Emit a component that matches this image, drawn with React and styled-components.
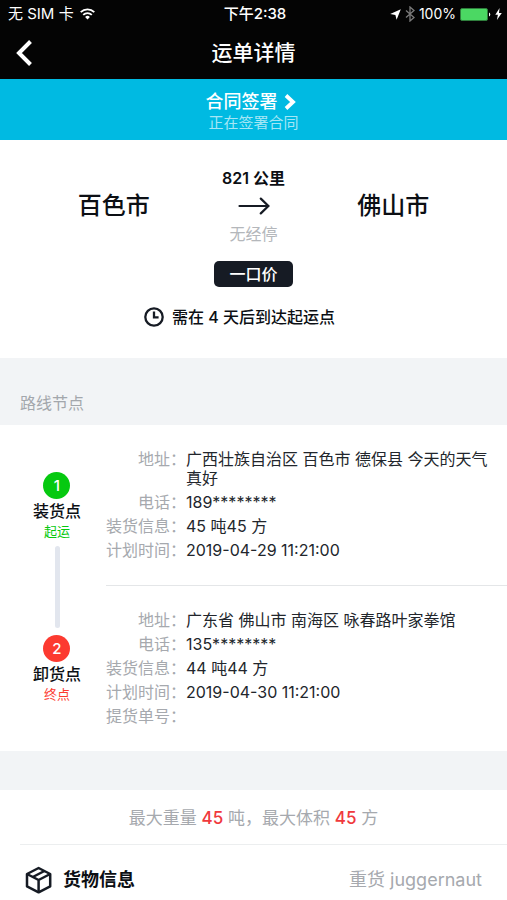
import React from 'react';
import styled, { createGlobalStyle } from 'styled-components';

const GlobalStyle = createGlobalStyle`
  * {
    box-sizing: border-box;
  }

  body {
    margin: 0;
    background: #fff;
    color: #0c0f14;
    font-family: Inter, 'Noto Sans CJK SC', sans-serif;
    font-size: 16px;
    line-height: 20px;
  }

  h1, h2, p, dl, dd, ol {
    margin: 0;
    padding: 0;
  }

  button {
    border: 0;
    padding: 0;
    background: none;
    color: inherit;
    font: inherit;
    cursor: pointer;
  }

  svg {
    display: block;
    flex: none;
  }
`

const Header = styled.header`
  background: #040404;
  color: #fff;
`

const StatusBar = styled.div`
  display: grid;
  grid-template-columns: 1fr auto 1fr;
  align-items: center;
  height: 28px;
  padding: 0 5px 0 8px;
  font-size: 15px;
`

const StatusGroup = styled.div`
  display: flex;
  align-items: center;
  justify-content: ${props => props.$end ? 'flex-end' : 'flex-start'};
  gap: ${props => props.$end ? '4px' : '6px'};
  font-size: ${props => props.$end ? '14px' : '15px'};
`

const Clock = styled.span`
  font-weight: 500;
`

const NavBar = styled.div`
  display: grid;
  grid-template-columns: 48px 1fr 48px;
  align-items: center;
  height: 51px;
  padding-bottom: 2px;
`

const BackButton = styled.button`
  display: flex;
  justify-content: center;
  padding: 8px 0;
`

const Title = styled.h1`
  text-align: center;
  font-size: 21px;
  font-weight: 500;
  line-height: 28px;
`

const ContractLink = styled.a`
  display: flex;
  flex-direction: column;
  align-items: center;
  padding: 12px 0 7px;
  background: #00bae2;
  color: #fff;
  text-decoration: none;
`

const ContractTitle = styled.span`
  display: flex;
  align-items: center;
  gap: 6px;
  padding-right: 6px;
  font-size: 18px;
  font-weight: 500;
  line-height: 22px;
`

const ContractState = styled.span`
  color: #a5e6f5;
  font-size: 15px;
`

const Summary = styled.section`
  display: flex;
  flex-direction: column;
  align-items: center;
  padding: 28px 0 31px;
`

const Route = styled.div`
  display: grid;
  grid-template-columns: 1fr 52px 1fr;
  align-items: center;
  width: 100%;
`

const City = styled.strong`
  text-align: center;
  font-size: 24px;
  font-weight: 500;
  line-height: 32px;
`

const Leg = styled.div`
  display: flex;
  flex-direction: column;
  align-items: center;
  gap: 9px;
  white-space: nowrap;
`

const Distance = styled.span`
  font-weight: 600;
`

const Via = styled.span`
  color: #b4b7bb;
`

const PriceTag = styled.span`
  margin-top: 17px;
  padding: 3px 15px;
  border-radius: 5px;
  background: #161b24;
  color: #fff;
  font-weight: 500;
`

const Deadline = styled.p`
  display: flex;
  align-items: center;
  gap: 8px;
  margin-top: 20px;
  padding-right: 28px;
  font-weight: 500;
`

const SectionTitle = styled.h2`
  padding: 35px 20px 12px;
  background: #f2f4f6;
  color: #a3a7ac;
  font-size: 16px;
  font-weight: 400;
`

const Nodes = styled.section`
  display: grid;
  grid-template-columns: 106px 1fr;
`

const Rail = styled.ol`
  display: flex;
  flex-direction: column;
  align-items: center;
  justify-content: center;
  padding-left: 8px;
  list-style: none;
`

const Step = styled.li`
  display: flex;
  flex-direction: column;
  align-items: center;
`

const StepNumber = styled.span`
  display: grid;
  place-items: center;
  width: 27px;
  height: 27px;
  margin-bottom: 2px;
  border-radius: 50%;
  background: ${props => props.$color};
  color: #fff;
  font-size: 15px;
  font-weight: 500;
`

const StepName = styled.span`
  font-weight: 500;
`

const StepRole = styled.span`
  color: ${props => props.$color};
  font-size: 13px;
`

const Connector = styled.li`
  width: 5px;
  height: 82px;
  margin: 5px 0 7px;
  border-radius: 3px;
  background: #e2e6ee;
`

const Details = styled.dl`
  display: flex;
  flex-direction: column;
  gap: 5px;
  padding: 25px 16px 25px 0;
  line-height: 19px;

  & + & {
    border-top: 1px solid #e4e6e8;
  }
`

const DetailRow = styled.div`
  display: grid;
  grid-template-columns: 80px 1fr;
`

const Label = styled.dt`
  color: #a6a9ae;
  text-align: right;
  white-space: nowrap;
`

const Value = styled.dd`
  color: #22262c;
`

const Spacer = styled.div`
  height: 39px;
  background: #f2f4f6;
`

const Limits = styled.p`
  padding: 18px 0 16px;
  color: #a6a9ae;
  text-align: center;
  font-size: 17px;
`

const Amount = styled.em`
  color: #f0393d;
  font-style: normal;
  font-weight: 500;
`

const Cargo = styled.section`
  display: flex;
  align-items: center;
  gap: 10px;
  margin-left: 20px;
  padding: 21px 25px 5px 5px;
  border-top: 1px solid #eceeef;
`

const CargoTitle = styled.h2`
  flex: 1;
  font-size: 18px;
  font-weight: 600;
  line-height: 28px;
`

const CargoName = styled.span`
  color: #a6a9ae;
  font-size: 18px;
`

const nodes = [
  {
    name: '装货点',
    role: '起运',
    color: '#06c910',
    details: [
      ['地址', '广西壮族自治区 百色市 德保县 今天的天气真好'],
      ['电话', '189********'],
      ['装货信息', '45 吨45 方'],
      ['计划时间', '2019-04-29 11:21:00'],
    ],
  },
  {
    name: '卸货点',
    role: '终点',
    color: '#fc3a30',
    details: [
      ['地址', '广东省 佛山市 南海区 咏春路叶家拳馆'],
      ['电话', '135********'],
      ['装货信息', '44 吨44 方'],
      ['计划时间', '2019-04-30 11:21:00'],
      ['提货单号', ''],
    ],
  },
]

function WifiIcon() {
  return (
    <svg width='15' height='12' viewBox='0 0 15 12' fill='none' stroke='#fff' strokeWidth='1.8'>
      <path d='M0.7 4.2a9.6 9.6 0 0 1 13.6 0' />
      <path d='M3.2 6.9a6.1 6.1 0 0 1 8.6 0' />
      <path d='M7.5 11.4L5.1 9a3.4 3.4 0 0 1 4.8 0z' fill='#fff' stroke='none' />
    </svg>
  )
}

function LocationIcon() {
  return (
    <svg width='11' height='11' viewBox='0 0 11 11' fill='#fff'>
      <path d='M10.8 0.3L6.6 10.8 5.4 6 0.2 5z' />
    </svg>
  )
}

function BluetoothIcon() {
  return (
    <svg width='10' height='16' viewBox='0 0 10 16' fill='none' stroke='#7b7b7b' strokeWidth='1.3'>
      <path d='M1 4.5l8 7L5 15V1l4 3.5-8 7' />
    </svg>
  )
}

function BatteryIcon() {
  return (
    <svg width='31' height='13' viewBox='0 0 31 13'>
      <rect x='0.5' y='0.5' width='27' height='12' rx='1.5' fill='#4bd863' stroke='#2f7e3c' />
      <path d='M29 4.5a2.2 2.2 0 0 1 0 4z' fill='#fff' />
    </svg>
  )
}

function BoltIcon() {
  return (
    <svg width='7' height='12' viewBox='0 0 7 12' fill='#fff'>
      <path d='M4.6 0L0.3 6.7h2.6L1.9 12 6.8 4.9H4z' />
    </svg>
  )
}

function BackIcon() {
  return (
    <svg width='18' height='26' viewBox='0 0 18 26' fill='none' stroke='#fff' strokeWidth='4'>
      <path d='M15.5 1.5L4 13l11.5 11.5' />
    </svg>
  )
}

function ChevronIcon() {
  return (
    <svg width='12' height='16' viewBox='0 0 12 16' fill='none' stroke='#fff' strokeWidth='3.8'>
      <path d='M2 1.5L9 8l-7 6.5' />
    </svg>
  )
}

function ArrowIcon() {
  return (
    <svg width='32' height='18' viewBox='0 0 32 18' fill='none' stroke='#161b24' strokeWidth='2.2' strokeLinecap='round'>
      <path d='M1.5 9H30M22.8 1.6L30.4 9l-7.6 7.4' />
    </svg>
  )
}

function ClockIcon() {
  return (
    <svg width='20' height='20' viewBox='0 0 20 20' fill='none' stroke='#161b24' strokeWidth='2.3'>
      <circle cx='10' cy='10' r='8.7' />
      <path d='M10 4.5v5.8h4.6' />
    </svg>
  )
}

function BoxIcon() {
  return (
    <svg width='28' height='28' viewBox='0 0 28 28' fill='none' stroke='#161b24' strokeWidth='2.5' strokeLinejoin='round'>
      <path d='M13.6 2l11.6 6v12.3l-11.6 6L2 20.3V8z' />
      <path d='M2 8l11.6 6 11.6-6M13.6 14v12' />
      <path d='M7.8 11l11.6-6' />
    </svg>
  )
}

export default function App() {
  return (
    <>
      <GlobalStyle />
      <Header>
        <StatusBar>
          <StatusGroup>
            <span>无 SIM 卡</span>
            <WifiIcon />
          </StatusGroup>
          <Clock>下午2:38</Clock>
          <StatusGroup $end>
            <LocationIcon />
            <BluetoothIcon />
            <span>100%</span>
            <BatteryIcon />
            <BoltIcon />
          </StatusGroup>
        </StatusBar>
        <NavBar>
          <BackButton type='button' aria-label='返回'>
            <BackIcon />
          </BackButton>
          <Title>运单详情</Title>
        </NavBar>
      </Header>
      <main>
        <ContractLink href='#contract'>
          <ContractTitle>
            合同签署
            <ChevronIcon />
          </ContractTitle>
          <ContractState>正在签署合同</ContractState>
        </ContractLink>
        <Summary>
          <Route>
            <City>百色市</City>
            <Leg>
              <Distance>821 公里</Distance>
              <ArrowIcon />
              <Via>无经停</Via>
            </Leg>
            <City>佛山市</City>
          </Route>
          <PriceTag>一口价</PriceTag>
          <Deadline>
            <ClockIcon />
            需在 4 天后到达起运点
          </Deadline>
        </Summary>
        <SectionTitle>路线节点</SectionTitle>
        <Nodes>
          <Rail>
            {nodes.map((node, i) => (
              <React.Fragment key={node.name}>
                {i > 0 && <Connector aria-hidden='true' />}
                <Step>
                  <StepNumber $color={node.color}>{i + 1}</StepNumber>
                  <StepName>{node.name}</StepName>
                  <StepRole $color={node.color}>{node.role}</StepRole>
                </Step>
              </React.Fragment>
            ))}
          </Rail>
          <div>
            {nodes.map(node => (
              <Details key={node.name}>
                {node.details.map(([label, value]) => (
                  <DetailRow key={label}>
                    <Label>{label}：</Label>
                    <Value>{value}</Value>
                  </DetailRow>
                ))}
              </Details>
            ))}
          </div>
        </Nodes>
        <Spacer />
        <Limits>
          最大重量 <Amount>45</Amount> 吨，最大体积 <Amount>45</Amount> 方
        </Limits>
        <Cargo>
          <BoxIcon />
          <CargoTitle>货物信息</CargoTitle>
          <CargoName>重货 juggernaut</CargoName>
        </Cargo>
      </main>
    </>
  )
}
